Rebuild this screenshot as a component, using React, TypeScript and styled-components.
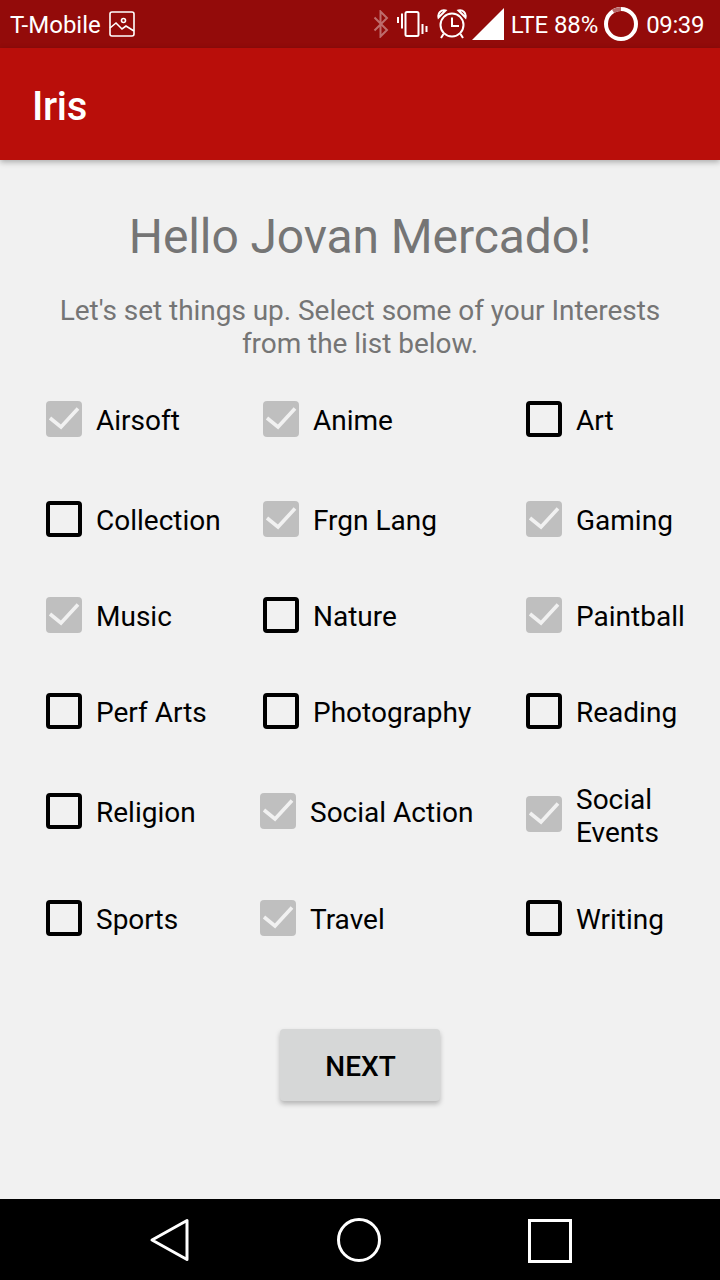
import React from 'react';
import styled, {createGlobalStyle} from 'styled-components';

type Interest = {
    label: React.ReactNode;
    checked: boolean;
    drop?: boolean;
};

type InterestRow = {
    gap: number;
    tall?: boolean;
    inset: number;
    items: Interest[];
};

const rows: InterestRow[] = [
    {gap: 0, inset: 263, items: [{label: 'Airsoft', checked: true}, {label: 'Anime', checked: true}, {label: 'Art', checked: false}]},
    {gap: 52, inset: 263, items: [{label: 'Collection', checked: false}, {label: 'Frgn Lang', checked: true}, {label: 'Gaming', checked: true}]},
    {gap: 48, inset: 263, items: [{label: 'Music', checked: true}, {label: 'Nature', checked: false}, {label: 'Paintball', checked: true}]},
    {gap: 48, inset: 263, items: [{label: 'Perf Arts', checked: false}, {label: 'Photography', checked: false}, {label: 'Reading', checked: false}]},
    {gap: 39, tall: true, inset: 260, items: [{label: 'Religion', checked: false}, {label: 'Social Action', checked: true}, {label: <>Social<br/>Events</>, checked: true, drop: true}]},
    {gap: 46, inset: 260, items: [{label: 'Sports', checked: false}, {label: 'Travel', checked: true}, {label: 'Writing', checked: false}]},
];

const BluetoothIcon = () => (
    <svg width='16' height='28' viewBox='0 0 16 28' fill='none' stroke='#fff' strokeOpacity='0.4' strokeWidth='2'>
        <path d='M1.5 7.5 14 20l-6.5 6.5v-25L14 8 1.5 20.5'/>
    </svg>
);

const VibrateIcon = () => (
    <svg width='31' height='26' viewBox='0 0 31 26' fill='none' stroke='#fff' strokeWidth='2'>
        <rect x='8.5' y='1' width='13' height='24' rx='1.5'/>
        <path d='M1 6v6M5 2.5v15M25.5 13v10M29.5 15v6'/>
    </svg>
);

const AlarmIcon = () => (
    <svg width='30' height='32' viewBox='0 0 30 32' fill='none' stroke='#fff' strokeWidth='2'>
        <circle cx='15' cy='17' r='11.5'/>
        <path d='M15 9.5V18h7'/>
        <path d='M1.5 9.5C.5 5 4 1.5 8.5 2.5ZM28.5 9.5C29.5 5 26 1.5 21.5 2.5Z'/>
        <path d='M6.5 26 4 30M23.5 26 26 30'/>
    </svg>
);

const SignalIcon = () => (
    <svg width='32' height='32' viewBox='0 0 32 32'>
        <path d='M32 0v32H0Z' fill='#fff'/>
    </svg>
);

const BatteryRing = () => (
    <svg width='34' height='34' viewBox='0 0 34 34' fill='none' strokeWidth='4'>
        <circle cx='17' cy='17' r='15' stroke='#fff'/>
        <path d='M17 2A15 15 0 0 0 9 4.3' stroke='#b8696a'/>
    </svg>
);

const PictureIcon = () => (
    <svg width='26' height='26' viewBox='0 0 26 26' fill='none' stroke='#fff' strokeWidth='1.6'>
        <rect x='1' y='1' width='24' height='24' rx='2'/>
        <circle cx='14.5' cy='9.5' r='2'/>
        <path d='M1 17l6-5 6 6 4-3 8 5'/>
    </svg>
);

const CheckGlyph = () => (
    <svg width='36' height='36' viewBox='0 0 36 36' fill='none' stroke='#f1f1f1' strokeWidth='3.6'>
        <path d='M4 17l11 9L32 7.5'/>
    </svg>
);

export default function App() {
    return (
        <Screen>
            <GlobalStyle/>
            <StatusBar>
                <StatusSlot $after={8}>
                    <StatusText>T-Mobile</StatusText>
                </StatusSlot>
                <PictureIcon/>
                <StatusSpacer/>
                <StatusSlot $after={8}><BluetoothIcon/></StatusSlot>
                <StatusSlot $after={9}><VibrateIcon/></StatusSlot>
                <StatusSlot $after={5}><AlarmIcon/></StatusSlot>
                <StatusSlot $after={7}><SignalIcon/></StatusSlot>
                <StatusSlot $after={6}><NetworkText>LTE 88%</NetworkText></StatusSlot>
                <StatusSlot $after={8}><BatteryRing/></StatusSlot>
                <TimeText>09:39</TimeText>
            </StatusBar>
            <AppBar>Iris</AppBar>
            <Content>
                <Title>Hello Jovan Mercado!</Title>
                <Subtitle>Let's set things up. Select some of your Interests<br/>from the list below.</Subtitle>
                <Interests>
                    {rows.map((row, index) => (
                        <Row
                            key={index}
                            $gap={row.gap}
                            $inset={row.inset}
                            $tall={row.tall}
                        >
                            {row.items.map((item, itemIndex) => (
                                <Option
                                    key={itemIndex}
                                    $drop={item.drop}
                                >
                                    <Box
                                        $checked={item.checked}
                                        $lift={item.drop ? 4 : 2}
                                    >
                                        {item.checked && <CheckGlyph/>}
                                    </Box>
                                    <OptionLabel>{item.label}</OptionLabel>
                                </Option>
                            ))}
                        </Row>
                    ))}
                </Interests>
                <NextButton>NEXT</NextButton>
            </Content>
            <NavBar>
                <NavSlot>
                    <svg width='44' height='46' viewBox='0 0 44 46' fill='none' stroke='#fff' strokeWidth='3' strokeLinejoin='round'>
                        <path d='M5 23 40 3.5v39Z'/>
                    </svg>
                </NavSlot>
                <NavSlot>
                    <svg width='46' height='46' viewBox='0 0 46 46' fill='none' stroke='#fff' strokeWidth='3'>
                        <circle cx='23' cy='23' r='20.5'/>
                    </svg>
                </NavSlot>
                <NavSlot>
                    <svg width='46' height='46' viewBox='0 0 46 46' fill='none' stroke='#fff' strokeWidth='3'>
                        <rect x='3.5' y='3.5' width='41' height='41'/>
                    </svg>
                </NavSlot>
            </NavBar>
        </Screen>
    );
}

const GlobalStyle = createGlobalStyle`
  html, body {
    margin: 0;
    padding: 0;
  }

  body {
    font-family: Roboto, "Liberation Sans", sans-serif;
  }
`;

const Screen = styled.div`
  width: 720px;
  height: 1280px;
  display: flex;
  flex-direction: column;
  background: #f1f1f1;
  overflow: hidden;
`;

const StatusBar = styled.div`
  height: 48px;
  flex: none;
  display: flex;
  align-items: center;
  padding: 0 16px 0 10px;
  background: #930b0a;
  color: #fff;
`;

const StatusSpacer = styled.div`
  flex: 1;
`;

const StatusSlot = styled.div<{$after: number}>`
  display: flex;
  align-items: center;
  margin-right: ${(p) => p.$after}px;
`;

const StatusText = styled.span`
  font-size: 24px;
  line-height: 48px;
  padding-top: 2px;
`;

const NetworkText = styled(StatusText)`
  letter-spacing: -0.1px;
`;

const TimeText = styled(StatusText)`
  letter-spacing: -0.4px;
`;

const AppBar = styled.header`
  height: 112px;
  flex: none;
  display: flex;
  align-items: center;
  padding: 5px 32px 0;
  box-sizing: border-box;
  background: #b90e0a;
  color: #fff;
  font-size: 40px;
  font-weight: 500;
  letter-spacing: -0.3px;
  box-shadow: 0 2px 6px rgba(0, 0, 0, 0.3);
  position: relative;
`;

const Content = styled.main`
  flex: 1;
  display: flex;
  flex-direction: column;
  align-items: center;
`;

const Title = styled.h1`
  margin: 47px 0 0;
  font-size: 48px;
  line-height: 60px;
  font-weight: 400;
  letter-spacing: -0.1px;
  color: #757575;
`;

const Subtitle = styled.p`
  margin: 27px 0 0;
  font-size: 28px;
  line-height: 33px;
  letter-spacing: -0.04px;
  text-align: center;
  color: #757575;
`;

const Interests = styled.div`
  align-self: stretch;
  margin-top: 36px;
  display: flex;
  flex-direction: column;
`;

const Row = styled.div<{$gap: number; $inset: number; $tall?: boolean}>`
  display: grid;
  grid-template-columns: ${(p) => p.$inset - 46}px ${(p) => 526 - p.$inset}px 1fr;
  padding-left: 46px;
  margin-top: ${(p) => p.$gap}px;
  height: ${(p) => (p.$tall ? 74 : 48)}px;
`;

const Option = styled.label<{$drop?: boolean}>`
  display: flex;
  align-items: center;
  gap: 14px;
  padding-top: ${(p) => (p.$drop ? 8 : 0)}px;
`;

const Box = styled.span<{$checked: boolean; $lift: number}>`
  width: 36px;
  height: 36px;
  flex: none;
  margin-bottom: ${(p) => p.$lift}px;
  box-sizing: border-box;
  border-radius: 4px;
  background: ${(p) => (p.$checked ? '#bfbfbf' : 'transparent')};
  border: ${(p) => (p.$checked ? 'none' : '4px solid #000')};
`;

const OptionLabel = styled.span`
  font-size: 28px;
  line-height: 33px;
  color: #000;
`;

const NextButton = styled.button`
  margin-top: 86px;
  width: 160px;
  height: 72px;
  padding: 2px 0 0 1px;
  border: none;
  border-radius: 4px;
  background: #d6d7d7;
  color: #000;
  font-family: Roboto, sans-serif;
  font-size: 28px;
  font-weight: 500;
  box-shadow: 0 3px 5px rgba(0, 0, 0, 0.25);
`;

const NavBar = styled.nav`
  height: 81px;
  flex: none;
  display: flex;
  justify-content: center;
  align-items: center;
  padding-right: 2px;
  background: #000;
`;

const NavSlot = styled.div`
  width: 190px;
  display: flex;
  justify-content: center;
`;
